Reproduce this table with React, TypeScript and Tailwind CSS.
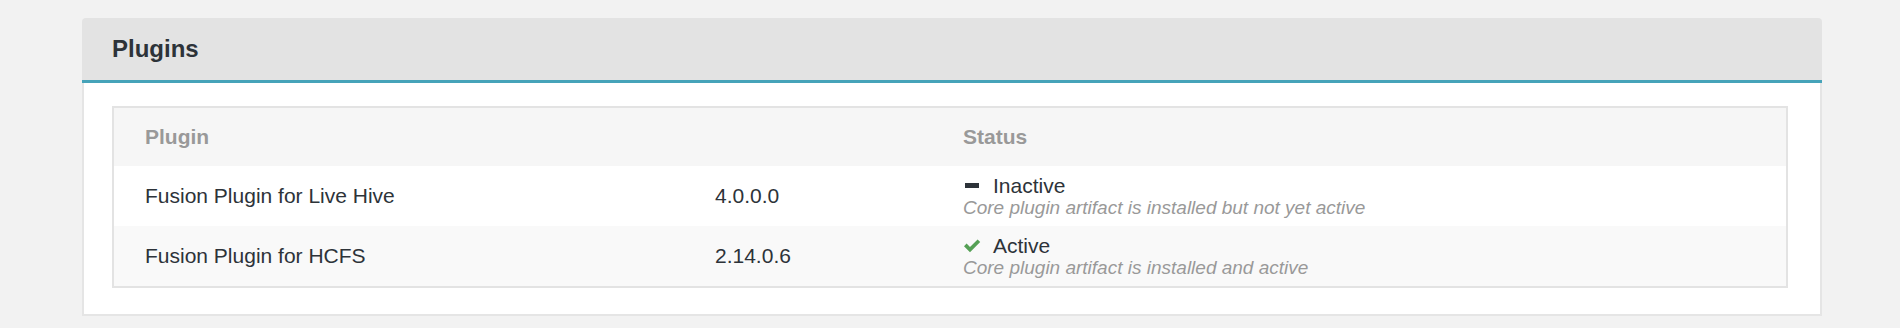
import React from 'react';

type Plugin = {
  name: string;
  version: string;
  active: boolean;
  note: string;
};

const plugins: Plugin[] = [
  {
    name: 'Fusion Plugin for Live Hive',
    version: '4.0.0.0',
    active: false,
    note: 'Core plugin artifact is installed but not yet active',
  },
  {
    name: 'Fusion Plugin for HCFS',
    version: '2.14.0.6',
    active: true,
    note: 'Core plugin artifact is installed and active',
  },
];

function CheckIcon() {
  return (
    <svg width="18" height="15" viewBox="0 0 18 15" className="block">
      <path d="M1 8.2 L3.6 5.6 L7 9 L14.6 1.4 L17.2 4 L7 14.2 Z" fill="#55a055" />
    </svg>
  );
}

function MinusIcon() {
  return <div className="ml-[2px] h-[5px] w-[14px] bg-[#2d3339]" />;
}

export default function App() {
  return (
    <div
      className="min-h-[328px] w-[1900px] bg-[#f2f2f2] pt-[18px] pl-[82px]"
      style={{ fontFamily: '"Liberation Sans", Arial, sans-serif' }}
    >
      <div className="w-[1740px]">
        {/* Panel heading */}
        <div className="flex h-[65px] items-center rounded-t-[4px] border-b-[3px] border-[#46a3b9] bg-[#e3e3e3] pl-[30px]">
          <h2 className="text-[24px] font-bold leading-none text-[#2d3339]">Plugins</h2>
        </div>

        {/* Panel body */}
        <div className="border-x-2 border-b-2 border-[#e5e5e5] bg-white pt-[23px] pb-[26px] pl-[28px] pr-[32px]">
          <div className="border-2 border-[#e3e3e3]">
            {/* header row */}
            <div className="grid h-[58px] grid-cols-[570px_248px_1fr] items-center bg-[#f6f6f6] text-[21px] font-bold text-[#999999]">
              <div className="pl-[31px]">Plugin</div>
              <div />
              <div className="pl-[31px]">Status</div>
            </div>

            {plugins.map((p, i) => (
              <div
                key={p.name}
                className={
                  'grid h-[60px] grid-cols-[570px_248px_1fr] items-center text-[21px] text-[#2d3339] ' +
                  (i % 2 === 0 ? 'bg-white' : 'bg-[#f9f9f9]')
                }
              >
                <div className="pl-[31px] leading-[24px]">{p.name}</div>
                <div className="pl-[31px] leading-[24px]">{p.version}</div>
                <div className="pl-[31px]">
                  <div className="flex items-center leading-[23px]">
                    <div className="flex w-[30px] items-center">
                      {p.active ? <CheckIcon /> : <MinusIcon />}
                    </div>
                    <span>{p.active ? 'Active' : 'Inactive'}</span>
                  </div>
                  <div className="text-[19px] italic leading-[22px] text-[#999999]">{p.note}</div>
                </div>
              </div>
            ))}
          </div>
        </div>
      </div>
    </div>
  );
}
